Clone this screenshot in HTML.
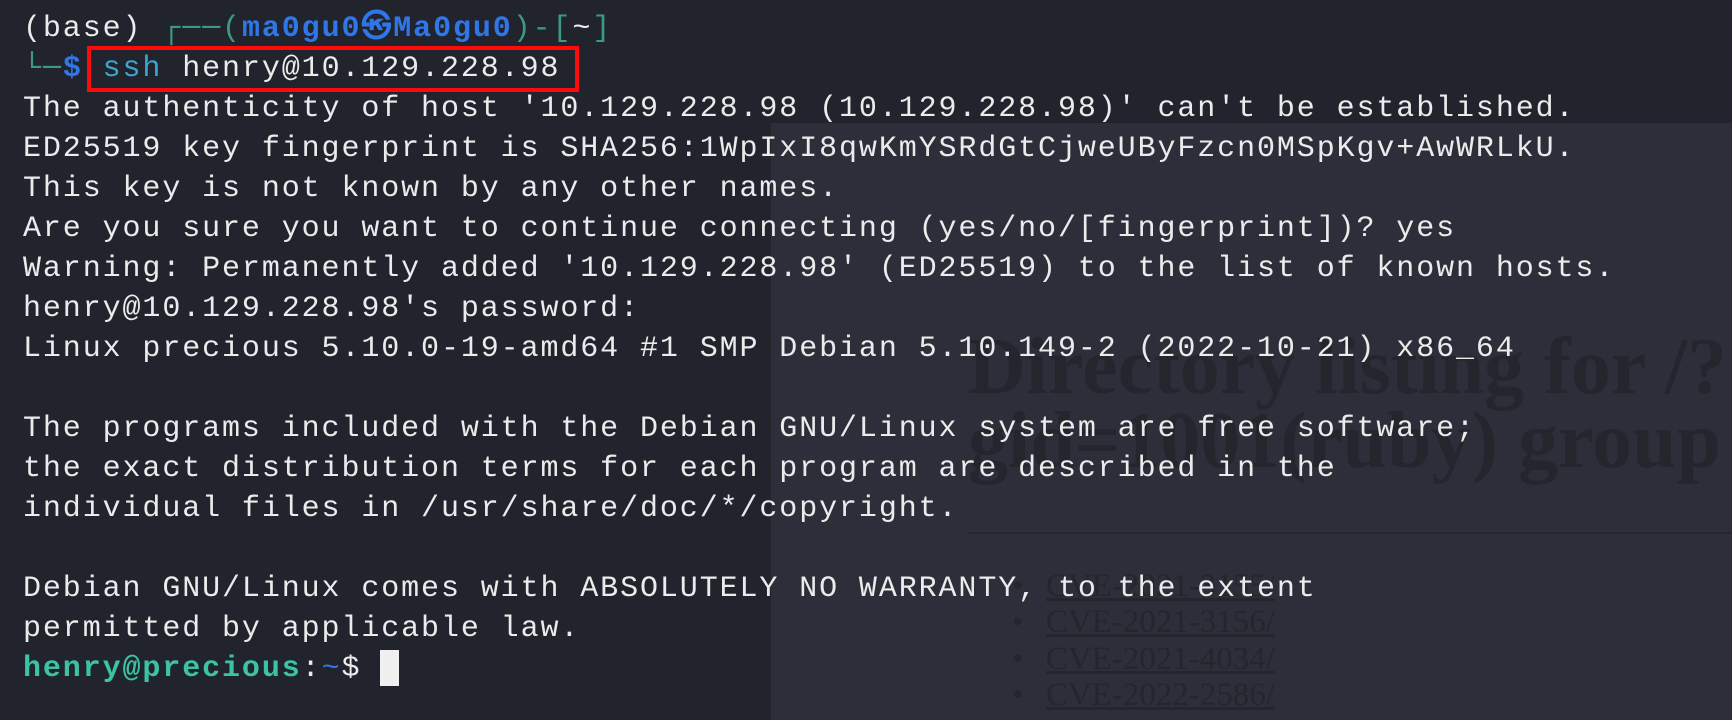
<!DOCTYPE html>
<html><head><meta charset="utf-8"><style>
html,body{margin:0;padding:0;width:1732px;height:720px;overflow:hidden;background:#22242d;}
.panel{position:absolute;left:771px;top:123px;width:961px;height:597px;background:#2c2f39;}
.ghost{position:absolute;font-family:"Liberation Serif",serif;color:#24262e;}
.h{left:968px;top:330px;font-size:80px;font-weight:bold;line-height:74px;white-space:nowrap;}
.hr{position:absolute;left:968px;top:532px;width:770px;height:2px;background:#262830;}
.li{font-size:33px;left:1012px;white-space:nowrap;}
.li span{text-decoration:underline;margin-left:14px}
.t{position:absolute;left:23px;top:9px;font-family:"Liberation Mono","DejaVu Sans Mono",monospace;font-size:30px;letter-spacing:1.9px;line-height:40px;color:#ebebeb;white-space:pre;}
.g{color:#3c9a82}.b{color:#2f76e8;font-weight:bold}.c{color:#3aa6cc}.gr{color:#3bc4a2;font-weight:bold}
.box{position:absolute;left:87px;top:46px;width:484px;height:38px;border:4px solid #ff0a0a;}
.cur{position:absolute;left:380px;top:650px;width:19px;height:36px;background:#f0f0f0;}
</style></head><body>
<div class="panel"></div>
<div class="ghost h">Directory listing for /?<br>gid=1001(ruby) group</div>
<div class="hr"></div>
<div class="ghost li" style="top:568px">• <span>CVE-2021-3155/</span></div>
<div class="ghost li" style="top:604px">• <span>CVE-2021-3156/</span></div>
<div class="ghost li" style="top:641px">• <span>CVE-2021-4034/</span></div>
<div class="ghost li" style="top:677px">• <span>CVE-2022-2586/</span></div>
<div class="box"></div>
<div class="t">(base) <span class="g">┌──(</span><span class="b">ma0gu0㉿Ma0gu0</span><span class="g">)-[</span>~<span class="g">]</span>
<span class="g">└─</span><span class="b">$</span> <span class="c">ssh</span> henry@10.129.228.98
The authenticity of host '10.129.228.98 (10.129.228.98)' can't be established.
ED25519 key fingerprint is SHA256:1WpIxI8qwKmYSRdGtCjweUByFzcn0MSpKgv+AwWRLkU.
This key is not known by any other names.
Are you sure you want to continue connecting (yes/no/[fingerprint])? yes
Warning: Permanently added '10.129.228.98' (ED25519) to the list of known hosts.
henry@10.129.228.98's password:
Linux precious 5.10.0-19-amd64 #1 SMP Debian 5.10.149-2 (2022-10-21) x86_64

The programs included with the Debian GNU/Linux system are free software;
the exact distribution terms for each program are described in the
individual files in /usr/share/doc/*/copyright.

Debian GNU/Linux comes with ABSOLUTELY NO WARRANTY, to the extent
permitted by applicable law.
<span class="gr">henry@precious</span>:<span class="b" style="font-weight:normal">~</span>$ </div>
<div class="cur"></div>
</body></html>
